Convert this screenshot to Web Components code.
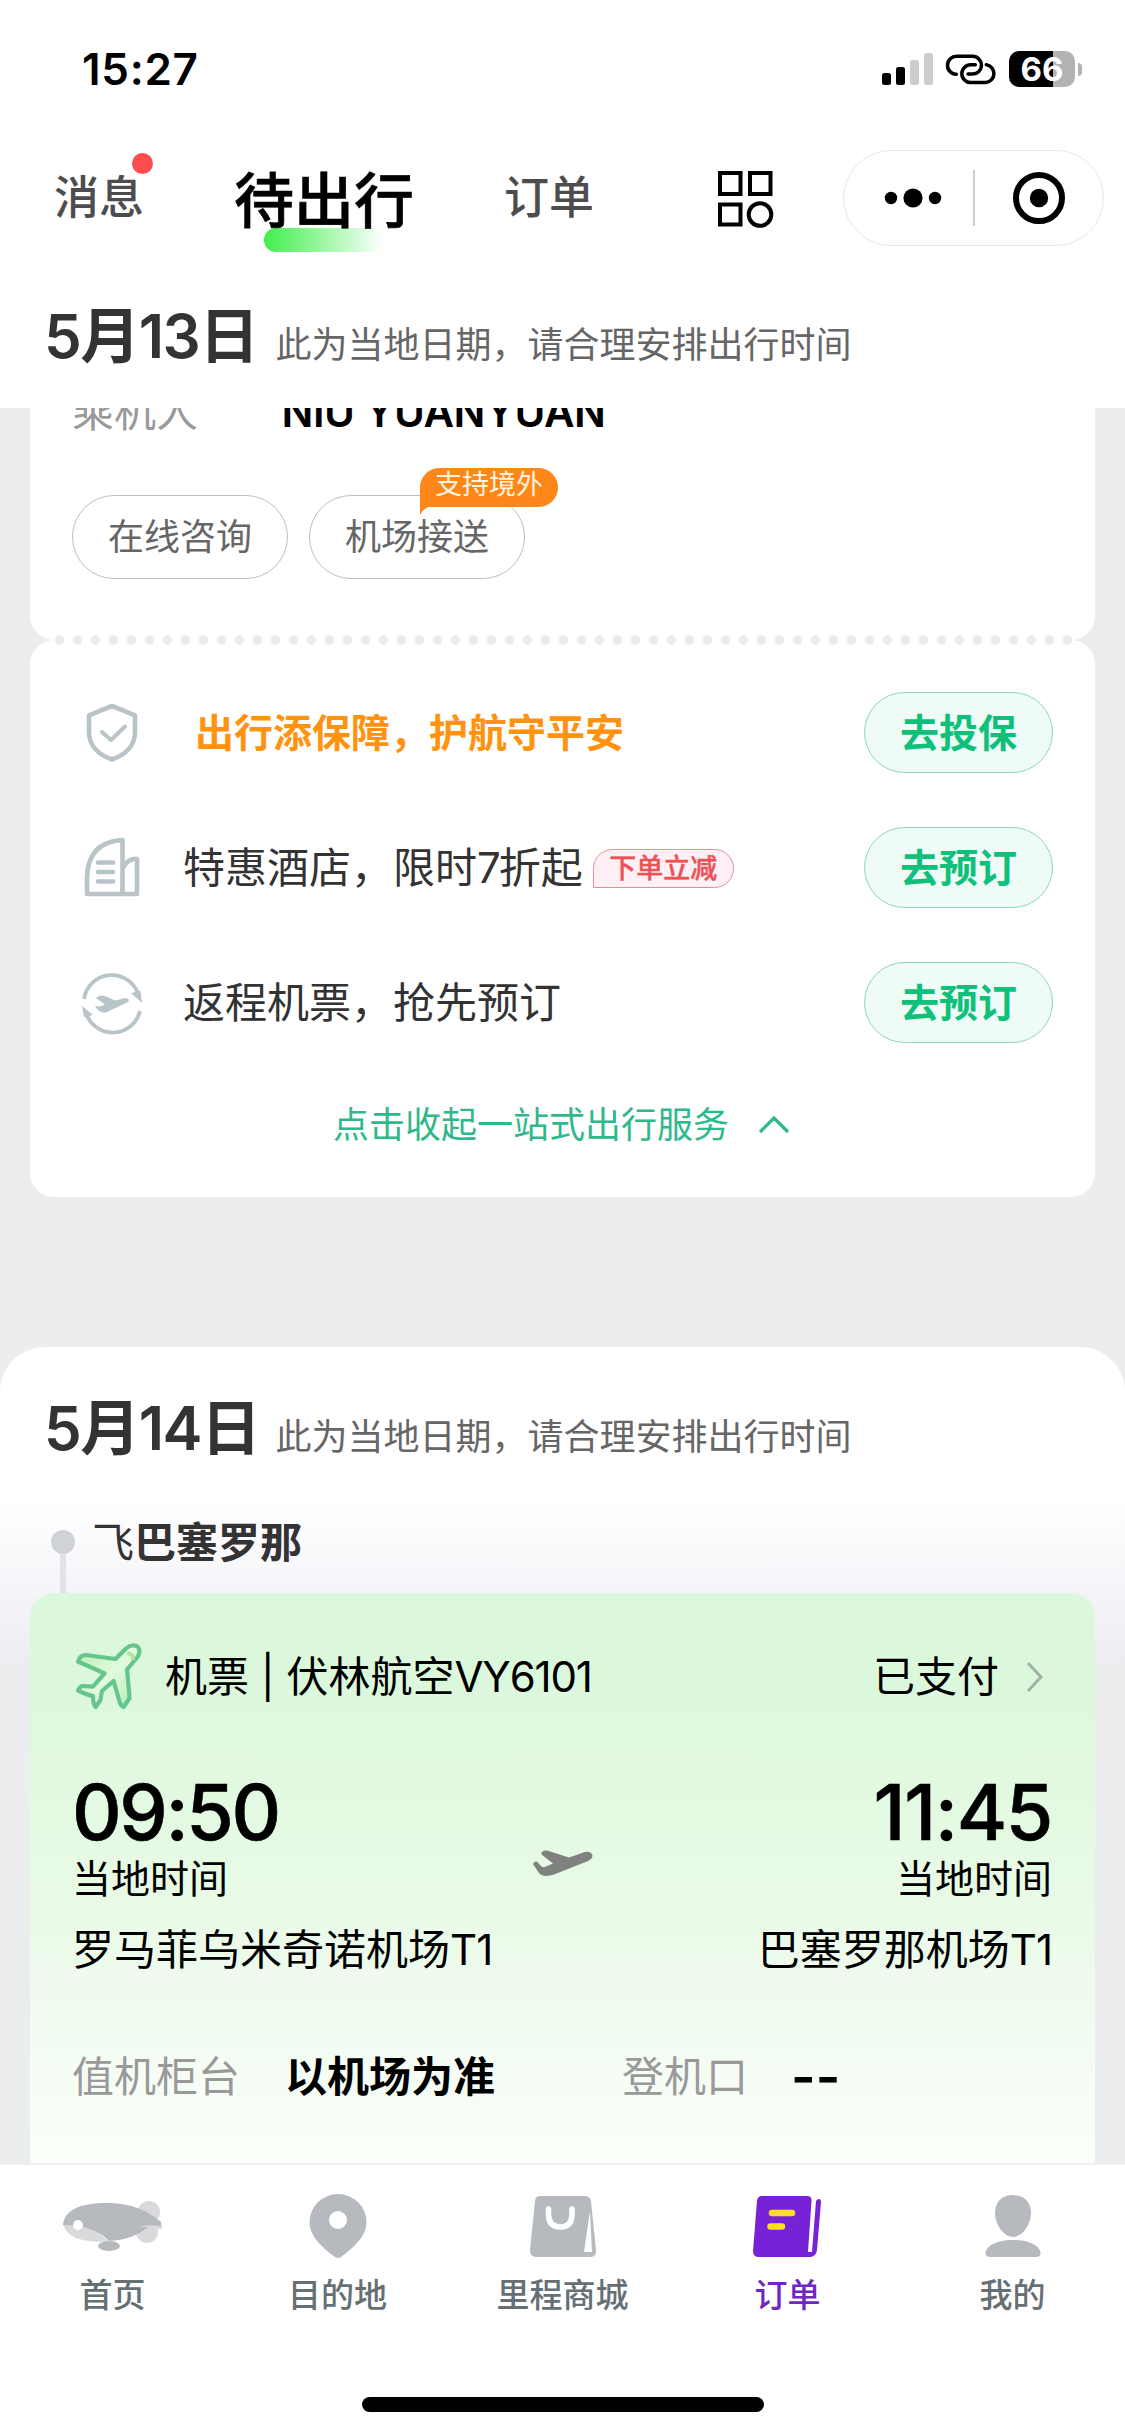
<!DOCTYPE html>
<html lang="zh-CN">
<head>
<meta charset="utf-8">
<title>待出行</title>
<style>
html,body{margin:0;padding:0}
body{width:1125px;height:2436px;overflow:hidden;background:#fff;font-family:Inter,"Noto Sans CJK SC",sans-serif;color:#000}
</style>
</head>
<body>
<trip-app></trip-app>
<script>
const define = (name, html) => {
  const t = document.createElement('template');
  t.innerHTML = html;
  customElements.define(name, class extends HTMLElement {
    constructor() {
      super();
      this.attachShadow({ mode: 'open' }).appendChild(t.content.cloneNode(true));
    }
  });
};

const ICONS = {
  signal: [51, 32, '<rect y="20" width="9" height="12" rx="2.5"/><rect x="14" y="14" width="9" height="18" rx="2.5"/><g fill="#ccc"><rect x="28" y="7" width="9" height="25" rx="2.5"/><rect x="42" width="9" height="32" rx="2.5"/></g>'],
  link: [51.3, 32.7, '<g transform="scale(.3333) translate(-318 -68)" fill="none" stroke="#000" stroke-width="10.5" stroke-linecap="round"><path d="M349 132A27 27 0 0 1 350 78H398A26.5 26.5 0 0 1 398 131H384"/><path d="M439 103A27 27 0 0 1 438 156.500H392A26.500 26.500 0 0 1 392 103.500H406"/></g>'],
  grid: [56, 58, '<g fill="none" stroke="#000" stroke-width="4"><path d="M3 3h20.500v21H3zM33 3h20.500v21H33zM3 34.500h20.500v20H3z"/><circle cx="43" cy="44.500" r="11.300"/></g>'],
  dots: [58, 20, '<circle cx="7" cy="10" r="6.200"/><circle cx="29" cy="10" r="9.600"/><circle cx="51" cy="10" r="6.200"/>'],
  target: [52, 52, '<circle cx="26" cy="26" r="23" fill="none" stroke="#000" stroke-width="6"/><circle cx="26" cy="26" r="9.200"/>'],
  shield: [54, 60, '<g fill="none" stroke="#b9c4c8" stroke-width="4.600" stroke-linejoin="round" stroke-linecap="round"><path d="M27 3L50 12.300V29C50 43 40 52 27 56.500C14 52 4 43 4 29V12.300Z"/><path d="M17 29L26 37L40 23.500" stroke-width="4"/></g>'],
  hotel: [56, 60, '<g fill="none" stroke="#b9c4c8" stroke-width="4.600" stroke-linecap="round" stroke-linejoin="round"><path d="M3 56V41Q3 4 38.500 2V56M3 56H53V21Q44 20 39 30"/><path d="M14 24.500H29M14 34H29M14 43.500H29"/></g>'],
  roundtrip: [60, 60, '<g fill="none" stroke="#b9c4c8" stroke-width="3.800"><path d="M2 26A28 28 0 0 1 56.500 22"/><path d="M58 38A28 28 0 0 1 3.500 38"/></g><g fill="#b9c4c8"><path d="M49 20L60 30L58.500 18ZM11 42L0 33L2 44Z"/><path d="M13 33L18 33.500L23 31.500L14 25Q18 21.500 23 23L33 27.500L43 25Q48.500 25.500 46 29L27 38Q19 43 13 33Z"/></g>'],
  up: [32, 20, '<path d="M2 17L16 3L30 17" fill="none" stroke="#2fb88a" stroke-width="3.200" />'],
  right: [18, 32, '<path d="M2 2L15 16L2 30" fill="none" stroke="#a5b0a7" stroke-width="3"/>'],
  plane: [68, 68, '<defs><linearGradient id="g" x1="0" y1="0" x2="1" y2="1"><stop offset="0" stop-color="#b9efab"/><stop offset=".5" stop-color="#e2fadf"/><stop offset="1" stop-color="#aeebae"/></linearGradient></defs><path d="M51 5.500C55 2 60 1.500 63 4C66 8 64 13 60 17L52 26.500L54.600 55L48.600 64Q46 63 45 60L38.600 38L27 48L25.400 57L20.700 64Q18 62 18 53Q12 52 3 47.500Q5 43 8 43L17.900 43.700L29.600 30.300L3 18.500Q5 12 11 12L40.400 16Z" fill="url(#g)" stroke="#66c58d" stroke-width="4.200" stroke-linejoin="round"/><path d="M52 10Q59 11 58 17" fill="none" stroke="#a9e79c" stroke-width="4"/>'],
  flight: [62, 28, '<path d="M1 15Q3 11 6 13.500Q9 18 12 18.300L21 14.500L9.500 5.500Q9 1 15 1.500L37 8.500L53 3Q59 2 60.500 6.500Q60.500 9.500 56 12L22 25.500Q11 29 7 24Z" fill="#7f827f"/>'],
  whale: [100, 50, '<g fill="#dadadc"><circle cx="86" cy="11" r="11"/><circle cx="84" cy="31" r="11"/><path d="M0 23Q4 36 20 39Q32 42 45 40L30 27Z"/><path d="M78 22L99 24V28H88Z"/></g><path d="M0 24C1 8 20 2 42 2C70 2 85 10 98 21Q99 24 97 25Q84 23 76 26H85Q70 39 46 40Q39 33 32 30Q20 24 0 24Z" fill="#b6babf"/><ellipse cx="46" cy="45" rx="11" ry="5" fill="#b6babf"/><circle cx="15" cy="24" r="5" fill="#fff"/>'],
  pin: [58, 66, '<path d="M29 1A28.500 28.500 0 0 0 .5 29.500C.5 45 18 58 26 64Q29 66 32 64C40 58 57.500 45 57.500 29.500A28.500 28.500 0 0 0 29 1Z" fill="#b6babf"/><circle cx="29" cy="27" r="9" fill="#fff"/>'],
  bag: [66, 61, '<path d="M10 0H55Q60 0 61 5L66 54Q67 61 60 61H6Q0 61 0 54L5 5Q5.500 0 10 0Z" fill="#b6babf"/><path d="M18.500 13V18Q18.500 31 30.500 31Q42 31 42 18V13" fill="none" stroke="#fff" stroke-width="5.500" stroke-linecap="round"/><path d="M60 15L54 56H62Z" fill="#fff"/>'],
  book: [69, 61, '<path d="M9 0H54Q59 0 58.500 5L55 56H59L63 5Q64 3 66 3Q68 3 68 6L64 54Q63 61 57 61H6Q0 61 0 55L4 5Q4.500 0 9 0Z" fill="#7822d8"/><path d="M19 17H39M17.500 30.500H29" stroke="#fade22" stroke-width="6.500" stroke-linecap="round"/>'],
  person: [56, 64, '<path d="M28 1C40 1 46 9 46 19C46 31 37 43 28 43S10 31 10 19C10 9 16 1 28 1Z" fill="#b6babf"/><path d="M28 46C44 46 56 52 55.500 60Q55 63 51 63H5Q1 63 .5 60C0 52 12 46 28 46Z" fill="#b6babf"/>']
};
customElements.define('ui-icon', class extends HTMLElement {
  connectedCallback() {
    const [w, h, body] = ICONS[this.getAttribute('name')];
    this.attachShadow({ mode: 'open' }).innerHTML =
      `<style>:host{display:block;flex:none;width:${w}px;height:${h}px}svg{display:block;overflow:visible}</style><svg width="${w}" height="${h}" viewBox="0 0 ${w} ${h}">${body}</svg>`;
  }
});

define('status-bar', `<style>
:host{display:flex;height:138px;box-sizing:border-box;padding:0 43px 0 82px;justify-content:space-between;align-items:center}
.time{font-size:44px;font-weight:600;line-height:60px;letter-spacing:0.7px}
.right{display:flex;align-items:center}
ui-icon{margin-right:13px}
.bat{width:66px;height:36px;border-radius:10px;background:linear-gradient(90deg,#000 44px,#b3b3b3 44px);color:#fff;font-weight:700;font-size:33px;line-height:36px;text-align:center}
.nub{width:4px;height:13px;margin-left:3px;background:#b3b3b3;border-radius:0 6px 6px 0}
</style><div class="time">15:27</div><div class="right"><ui-icon name="signal"></ui-icon><ui-icon name="link" style="margin-right:12px"></ui-icon><div class="bat">66</div><div class="nub"></div></div>`);

define('nav-bar', `<style>
:host{display:flex;height:120px;align-items:center;box-sizing:border-box;padding:0 21px 0 54px;font-size:45px;line-height:60px;font-weight:500;color:#4d4d4d}
.msg{position:relative;width:90px;margin-right:90px}
.msg i{position:absolute;left:78px;top:-15px;width:21px;height:21px;border-radius:50%;background:#fc4d4f}
.on{width:180px;font-size:60px;line-height:80px;font-weight:500;-webkit-text-stroke:.6px #000;color:#000;position:relative;top:3px;margin-right:90px}
.on:before{content:"";position:absolute;z-index:-1;left:30px;top:67px;width:120px;height:24px;border-radius:12px;background:linear-gradient(90deg,#40ee4e,#fff)}
.ord{width:90px;margin-right:123px}
ui-icon[name=grid]{margin-top:2px}
.cap{margin-left:auto;width:261px;height:96px;box-sizing:border-box;border:1.500px solid #e8e8e8;border-radius:49px;display:flex;align-items:center}
.cap div{flex:1;display:flex;justify-content:center}
.cap .l{flex:none;width:129px;box-sizing:border-box;padding-left:8px}
.cap b{width:1.500px;height:56px;background:#ccc}
</style><div class="msg">消息<i></i></div><div class="on">待出行</div><div class="ord">订单</div><ui-icon name="grid"></ui-icon>
<div class="cap"><div class="l"><ui-icon name="dots"></ui-icon></div><b></b><div><ui-icon name="target"></ui-icon></div></div>`);

define('date-heading', `<style>
:host{display:flex;align-items:center;padding-left:44px;height:80px}
.d{width:231.5px;font-size:60px;font-weight:600;line-height:80px;color:#333;white-space:nowrap;letter-spacing:-1.5px;margin-top:-2px}
.s{font-size:36px;line-height:50px;color:#666;padding-top:16px}
</style><div class="d"><slot></slot></div><div class="s">此为当地日期，请合理安排出行时间</div>`);

define('pill-button', `<style>
:host{display:flex;align-items:center;justify-content:center;position:relative;box-sizing:border-box;width:216px;height:84px;border:1.500px solid #b8c1c6;border-radius:42px;font-size:36px;line-height:50px;color:#666}
:host([tone=green]){width:189px;height:81px;border-color:#8ed6bc;background:#effbf7;color:#0ec07a;font-size:39px;font-weight:700}
</style><slot></slot>`);

define('bubble-tag', `<style>
:host{display:block;position:absolute;left:110px;top:-28px;width:138px;height:39px;box-sizing:border-box;border-radius:20px 20px 20px 0;background:#ff871a;color:#fff5de;font-size:27px;line-height:34px;text-align:center}
svg{position:absolute;left:0;top:38px}
</style><slot></slot><svg width="12" height="10"><path d="M0 0H12Q4 1 0 9Z" fill="#ff871a"/></svg>`);

define('service-row', `<style>
:host{display:flex;align-items:center;height:81px;margin-bottom:54px;font-size:42px;line-height:60px;color:#333}
.i{width:60px;display:flex;justify-content:center;margin-right:41px}
.t{flex:1;display:flex;align-items:center;white-space:nowrap}
</style><div class="i"><slot name="icon"></slot></div><div class="t"><slot></slot></div><slot name="action"></slot>`);

define('promo-tag', `<style>
:host{display:block;box-sizing:border-box;width:141px;height:39px;margin-left:10px;margin-top:2px;border:1.500px solid #f08c90;border-radius:20px 20px 20px 0;background:#fff0f5;color:#ec5255;font-size:27px;font-weight:500;-webkit-text-stroke:.4px #ec5255;line-height:38px;text-align:center}
</style><slot></slot>`);

define('service-card', `<style>
:host{display:block;position:relative;background:#fff;border-radius:24px;margin:0 30px;height:557px;box-sizing:border-box;padding:52px 42px 0 52px}
.dots{position:absolute;left:24px;top:-5px;width:1018px;height:10px;background:radial-gradient(circle at 5.500px 5px,#e7ecec 4.200px,#e7ecec00 5.200px) 0 0/18px 10px}
.o{font-size:39px;font-weight:700;color:#ff930f;padding-left:12px}
.n{letter-spacing:-2px}
.more{display:flex;align-items:center;font-size:36px;line-height:50px;color:#2fb88a;padding:3px 0 0 251px;margin-top:4px}
ui-icon[name=up]{margin-left:29px}
</style><div class="dots"></div>
<service-row><ui-icon slot="icon" name="shield"></ui-icon><span class="o">出行添保障，护航守平安</span><pill-button slot="action" tone="green">去投保</pill-button></service-row>
<service-row><ui-icon slot="icon" name="hotel"></ui-icon><span>特惠酒店，限时<span class="n">7</span>折起</span><promo-tag>下单立减</promo-tag><pill-button slot="action" tone="green">去预订</pill-button></service-row>
<service-row><ui-icon slot="icon" name="roundtrip"></ui-icon><span>返程机票，抢先预订</span><pill-button slot="action" tone="green">去预订</pill-button></service-row>
<div class="more"><span>点击收起一站式出行服务</span><ui-icon name="up"></ui-icon></div>`);

define('passenger-card', `<style>
:host{display:flow-root;background:#fff;border-radius:0 0 24px 24px;margin:0 30px;height:232px;box-sizing:border-box;padding:0 42px}
.p{display:flex;height:60px;margin-top:-26px;font-size:42px;line-height:60px;color:#999}
.p b{font-weight:600;color:#000;margin-left:83.5px;letter-spacing:-0.5px}
.b{display:flex;gap:21px;margin-top:53px}
</style><div class="p"><span>乘机人</span><b>NIU YUANYUAN</b></div><div class="b"><pill-button>在线咨询</pill-button><pill-button>机场接送<bubble-tag>支持境外</bubble-tag></pill-button></div>`);

define('route-stop', `<style>
:host{display:flex;height:102px;padding-left:51px}
.m{width:24px;margin-right:17px;display:flex;flex-direction:column;align-items:center;padding-top:39px}
.m i{width:24px;height:24px;border-radius:50%;background:#cfd3d8}
.m u{width:6px;flex:1;background:#e1e3e7}
.t{font-size:42px;line-height:60px;padding-top:22px;color:#333}
b{font-weight:700}
</style><div class="m"><i></i><u></u></div><div class="t">飞<b><slot></slot></b></div>`);

define('flight-card', `<style>
:host{display:block;margin:0 30px;height:572px;box-sizing:border-box;padding:50px 43px 0 45px;border-radius:24px 24px 0 0;background:linear-gradient(#dcf8dc 0,#dcf8dc 90px,#e0f9df 165px,#e8fae6 305px,#f1fbf0 420px,#fafffa 570px);font-size:42px;line-height:60px}
.h,.r,.f{display:flex;align-items:center}
.h{height:68px}.h span{margin-left:22px}.h .s{margin-left:auto;margin-right:27px}
.h ui-icon[name=right]{margin-right:8px}
.r{justify-content:space-between;margin:46px 0 0 -3px;height:226px}
.c{display:flex;flex-direction:column;width:457px}
.c.e{align-items:flex-end}
.tm{font-size:77px;font-weight:500;-webkit-text-stroke:.6px #000;line-height:82px;height:83px;padding-top:11px;letter-spacing:-2.400px}
.e .tm{letter-spacing:-1.400px}
.lt{font-size:39px;line-height:50px;margin-top:0}
.ap{margin-top:16px}
i{font-style:normal;letter-spacing:-1px}
.v{letter-spacing:-1.2px}
.r ui-icon{margin:0 -1px 15px 1px}
.f{margin-top:64px;margin-left:-3px;color:#999}
.f b{color:#000;font-weight:700;margin-left:45px}
</style><div class="h"><ui-icon name="plane"></ui-icon><span>机票 | 伏林航空<i class="v">VY6101</i></span><span class="s">已支付</span><ui-icon name="right"></ui-icon></div>
<div class="r"><div class="c"><div class="tm">09:50</div><div class="lt">当地时间</div><div class="ap">罗马菲乌米奇诺机场<i>T1</i></div></div><ui-icon name="flight"></ui-icon><div class="c e"><div class="tm">11:45</div><div class="lt">当地时间</div><div class="ap">巴塞罗那机场<i>T1</i></div></div></div>
<div class="f"><span>值机柜台</span><b style="width:337px">以机场为准</b><span>登机口</span><b style="font-size:53px;font-weight:600;margin-left:43px">--</b></div>`);

define('tab-item', `<style>
:host{display:flex;flex:1;flex-direction:column;align-items:center;font-size:33px;line-height:46px;font-weight:500;color:#666f73}
:host([active]){color:#7126c4}
.i{height:66px;display:flex;align-items:center;margin-bottom:13px}
</style><div class="i"><slot name="icon"></slot></div><div><slot></slot></div>`);

define('tab-bar', `<style>
:host{display:flex;flex-direction:column;align-items:center;height:273px;box-sizing:border-box;border-top:2px solid #efeff1;background:#fff}
.t{display:flex;width:100%;padding-top:28px}
.h{width:402px;height:15px;border-radius:8px;background:#000;margin-top:79px}
</style><div class="t">
<tab-item><ui-icon slot="icon" name="whale"></ui-icon>首页</tab-item>
<tab-item><ui-icon slot="icon" name="pin"></ui-icon>目的地</tab-item>
<tab-item><ui-icon slot="icon" name="bag"></ui-icon>里程商城</tab-item>
<tab-item active><ui-icon slot="icon" name="book"></ui-icon>订单</tab-item>
<tab-item><ui-icon slot="icon" name="person"></ui-icon>我的</tab-item>
</div><div class="h"></div>`);

define('trip-app', `<style>
:host{display:flex;flex-direction:column;width:1125px;height:2436px;background:#fff;isolation:isolate}
header{height:408px;display:flow-root}
main{height:1755px;overflow:hidden;background:#ecedef;display:flow-root}
section{margin-top:150px;border-radius:45px 45px 0 0;background:linear-gradient(#fff 0,#fff 155px,#f6f5f9 235px,#f0eff4 290px,#ecedef 320px);padding-top:42px}
</style><header><status-bar></status-bar><nav-bar></nav-bar><date-heading style="margin-top:39px">5月13日</date-heading></header>
<main><passenger-card></passenger-card><service-card></service-card>
<section><date-heading>5月14日</date-heading><route-stop style="margin-top:22px">巴塞罗那</route-stop><flight-card></flight-card></section></main>
<tab-bar></tab-bar>`);
</script>
</body>
</html>
